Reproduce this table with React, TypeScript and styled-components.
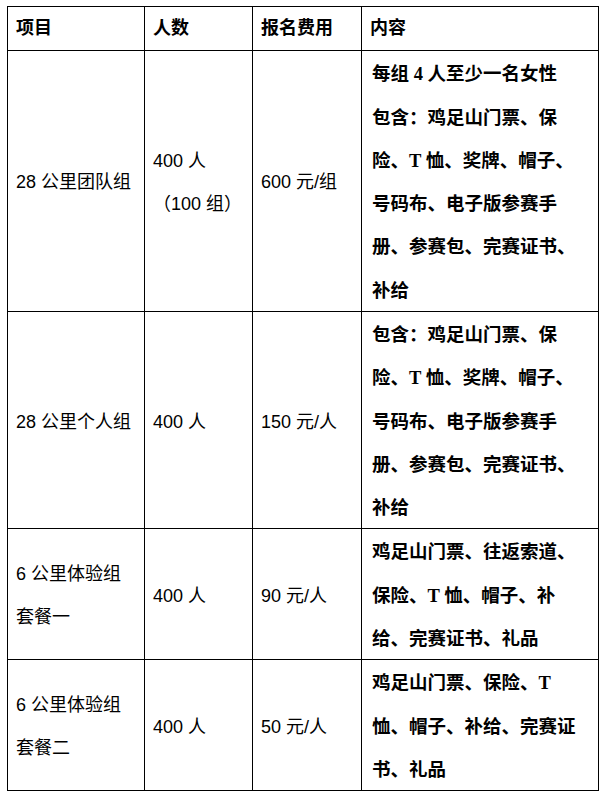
import React from 'react';
import styled, { createGlobalStyle } from 'styled-components';

const GlobalStyle = createGlobalStyle`
  html, body {
    margin: 0;
    padding: 0;
    background: #fff;
  }
`;

const Page = styled.div`
  padding: 6px 0 0 7px;
`;

const Table = styled.table`
  border-collapse: collapse;
  table-layout: fixed;
  width: 591px;
  color: #000;
  font-family: 'Liberation Sans', 'Noto Sans CJK SC', sans-serif;
  font-size: 18px;
`;

const HeadCell = styled.th`
  border: 1px solid #000;
  padding: 0 8px;
  line-height: 43.28px;
  text-align: left;
  font-weight: 700;
  white-space: nowrap;
`;

const Cell = styled.td<{ $content?: boolean }>`
  border: 1px solid #000;
  padding: ${({ $content }) => ($content ? '0 4px 0 10px' : '0 6px 0 8px')};
  line-height: 43.28px;
  vertical-align: ${({ $content }) => ($content ? 'top' : 'middle')};
  font-family: ${({ $content }) =>
    $content
      ? "'Liberation Serif', 'Noto Sans CJK SC', serif"
      : "'Liberation Sans', 'Noto Sans CJK SC', sans-serif"};
  font-size: ${({ $content }) => ($content ? '18.5px' : '18px')};
  font-weight: ${({ $content }) => ($content ? 700 : 400)};
  white-space: nowrap;
`;

// nudges glyphs down a little, like the reference's baseline
const Line = styled.div`
  position: relative;
  top: 2px;
`;

type Row = {
  name: string[];
  people: string[];
  fee: string;
  content: string[];
};

const includes = [
  '包含：鸡足山门票、保',
  '险、T 恤、奖牌、帽子、',
  '号码布、电子版参赛手',
  '册、参赛包、完赛证书、',
  '补给',
];

const rows: Row[] = [
  {
    name: ['28 公里团队组'],
    people: ['400 人', '（100 组）'],
    fee: '600 元/组',
    content: ['每组 4 人至少一名女性', ...includes],
  },
  {
    name: ['28 公里个人组'],
    people: ['400 人'],
    fee: '150 元/人',
    content: includes,
  },
  {
    name: ['6 公里体验组', '套餐一'],
    people: ['400 人'],
    fee: '90 元/人',
    content: ['鸡足山门票、往返索道、', '保险、T 恤、帽子、补', '给、完赛证书、礼品'],
  },
  {
    name: ['6 公里体验组', '套餐二'],
    people: ['400 人'],
    fee: '50 元/人',
    content: ['鸡足山门票、保险、T', '恤、帽子、补给、完赛证', '书、礼品'],
  },
];

const Lines: React.FC<{ lines: string[] }> = ({ lines }) => (
  <>
    {lines.map((l, i) => (
      <Line key={i}>{l}</Line>
    ))}
  </>
);

export default function App() {
  return (
    <Page>
      <GlobalStyle />
      <Table>
        <colgroup>
          <col style={{ width: 137 }} />
          <col style={{ width: 108 }} />
          <col style={{ width: 109 }} />
          <col style={{ width: 237 }} />
        </colgroup>
        <thead>
          <tr>
            <HeadCell>项目</HeadCell>
            <HeadCell>人数</HeadCell>
            <HeadCell>报名费用</HeadCell>
            <HeadCell>内容</HeadCell>
          </tr>
        </thead>
        <tbody>
          {rows.map((r, i) => (
            <tr key={i}>
              <Cell>
                <Lines lines={r.name} />
              </Cell>
              <Cell>
                <Lines lines={r.people} />
              </Cell>
              <Cell>
                <Line>{r.fee}</Line>
              </Cell>
              <Cell $content>
                <Lines lines={r.content} />
              </Cell>
            </tr>
          ))}
        </tbody>
      </Table>
    </Page>
  );
}
